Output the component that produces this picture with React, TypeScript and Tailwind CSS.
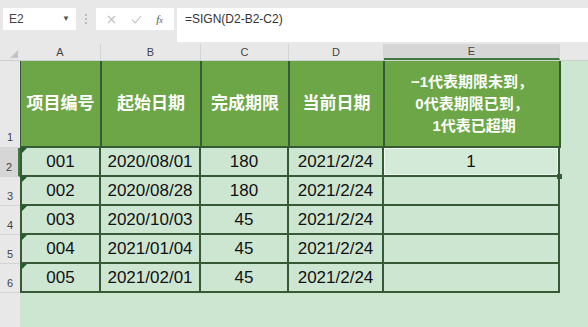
const rows = [
  { n: "2", a: "001", b: "2020/08/01", c: "180", d: "2021/2/24", e: "1" },
  { n: "3", a: "002", b: "2020/08/28", c: "180", d: "2021/2/24", e: "" },
  { n: "4", a: "003", b: "2020/10/03", c: "45", d: "2021/2/24", e: "" },
  { n: "5", a: "004", b: "2021/01/04", c: "45", d: "2021/2/24", e: "" },
  { n: "6", a: "005", b: "2021/02/01", c: "45", d: "2021/2/24", e: "" },
];

const cols = [
  { key: "A", w: "w-[81px]" },
  { key: "B", w: "w-[100px]" },
  { key: "C", w: "w-[88px]" },
  { key: "D", w: "w-[95px]" },
  { key: "E", w: "w-[176px]" },
];

function Toolbar() {
  return (
    <div className="h-[44px] flex items-start pt-2 bg-[#e8e8e8]">
      <div className="ml-[3px] w-[73px] h-[22px] bg-white flex items-center justify-between px-[6px] text-[12px] text-[#444]">
        <span>E2</span>
        <span className="text-[8px] text-[#555]">▼</span>
      </div>
      <div className="w-[20px] h-[22px] flex flex-col items-center justify-center gap-[2px]">
        <span className="w-[2px] h-[2px] bg-[#bbb]" />
        <span className="w-[2px] h-[2px] bg-[#bbb]" />
        <span className="w-[2px] h-[2px] bg-[#bbb]" />
      </div>
      <div className="w-[78px] h-[22px] bg-white flex items-center justify-around px-[4px]">
        <svg width="9" height="9" viewBox="0 0 9 9">
          <path d="M1 1L8 8M8 1L1 8" stroke="#bdbdbd" strokeWidth="1.1" fill="none" />
        </svg>
        <svg width="11" height="9" viewBox="0 0 11 9">
          <path d="M1 4.5L4 8L10 1" stroke="#bdbdbd" strokeWidth="1.1" fill="none" />
        </svg>
        <span className="text-[11px] italic text-[#555] font-['Liberation_Serif',serif]">
          f<span className="text-[8px]">x</span>
        </span>
      </div>
      <div className="ml-[3px] flex-1 h-[34px] bg-white pl-[8px] pt-[2px] text-[12px] text-[#333]">
        =SIGN(D2-B2-C2)
      </div>
    </div>
  );
}

export default function App() {
  return (
    <div className="w-[588px] h-[327px] overflow-hidden flex flex-col bg-[#e8e8e8] font-['Liberation_Sans','Noto_Sans_CJK_SC',sans-serif]">
      <Toolbar />

      {/* column headers */}
      <div className="h-[17px] flex text-[11px] text-[#444] border-b border-[#d0d0d0]">
        <div className="w-[20px] relative">
          <svg className="absolute right-[2px] bottom-[2px]" width="8" height="8" viewBox="0 0 8 8">
            <path d="M8 0L8 8L0 8Z" fill="#c4c4c4" />
          </svg>
        </div>
        {cols.map((c) => (
          <div
            key={c.key}
            className={`${c.w} flex items-center justify-center border-r border-[#d4d4d4] ${
              c.key === "E" ? "bg-[#d6d6d6] border-b-2 border-b-[#3d7a3d]" : "bg-[#e8e8e8]"
            }`}
          >
            {c.key}
          </div>
        ))}
        <div className="flex-1 bg-[#e8e8e8]" />
      </div>

      {/* header row */}
      <div className="h-[87px] flex">
        <div className="w-[20px] flex items-end justify-center pb-[2px] text-[11px] text-[#444] border-b border-[#d4d4d4]">
          1
        </div>
        <div className="flex bg-[#6ca646] text-white font-bold text-[17px] border-l border-[#355a35] border-b-2 border-b-[#355a35]">
          {["项目编号", "起始日期", "完成期限", "当前日期"].map((t, i) => (
            <div
              key={t}
              className={`${cols[i].w} ${i === 0 ? "w-[80px]" : ""} flex items-center justify-center border-r-2 border-[#355a35]`}
            >
              {t}
            </div>
          ))}
          <div className="w-[176px] flex flex-col items-center justify-center text-[15px] leading-[22px] border-r-2 border-[#355a35]">
            <span>−1代表期限未到，</span>
            <span>0代表期限已到，</span>
            <span className="whitespace-pre"> 1代表已超期</span>
          </div>
        </div>
        <div className="flex-1 bg-[#cde6d2]" />
      </div>

      {/* data rows */}
      {rows.map((r) => (
        <div key={r.n} className="h-[29px] flex">
          <div
            className={`w-[20px] flex items-end justify-center pb-[1px] text-[11px] text-[#444] border-b border-[#d4d4d4] ${
              r.n === "2" ? "bg-[#d6d6d6] border-r-2 border-r-[#3d7a3d]" : ""
            }`}
          >
            {r.n}
          </div>
          <div className="flex bg-[#cde6d2] text-[17px] text-[#111] border-b-2 border-[#355a35]">
            <div className="w-[81px] relative flex items-center justify-center border-x-2 border-[#355a35]">
              <svg className="absolute left-0 top-0" width="5" height="5" viewBox="0 0 5 5">
                <path d="M0 0L5 0L0 5Z" fill="#1f5c2a" />
              </svg>
              {r.a}
            </div>
            <div className="w-[100px] flex items-center justify-center border-r-2 border-[#355a35]">{r.b}</div>
            <div className="w-[88px] flex items-center justify-center border-r-2 border-[#355a35]">{r.c}</div>
            <div className="w-[95px] flex items-center justify-center border-r-2 border-[#355a35]">{r.d}</div>
            <div
              className={`w-[176px] relative flex items-center justify-center border-r-2 border-[#355a35] ${
                r.n === "2" ? "bg-[#d3ead8] ring-1 ring-inset ring-[#f2f8f3]" : ""
              }`}
            >
              {r.e}
              {r.n === "2" && (
                <span className="absolute right-[-4px] bottom-[-4px] w-[5px] h-[5px] bg-[#2e5e32]" />
              )}
            </div>
          </div>
          <div className="flex-1 bg-[#cde6d2]" />
        </div>
      ))}

      {/* empty sheet area */}
      <div className="flex-1 flex">
        <div className="w-[20px]" />
        <div className="flex-1 bg-[#cde6d2]" />
      </div>
    </div>
  );
}
